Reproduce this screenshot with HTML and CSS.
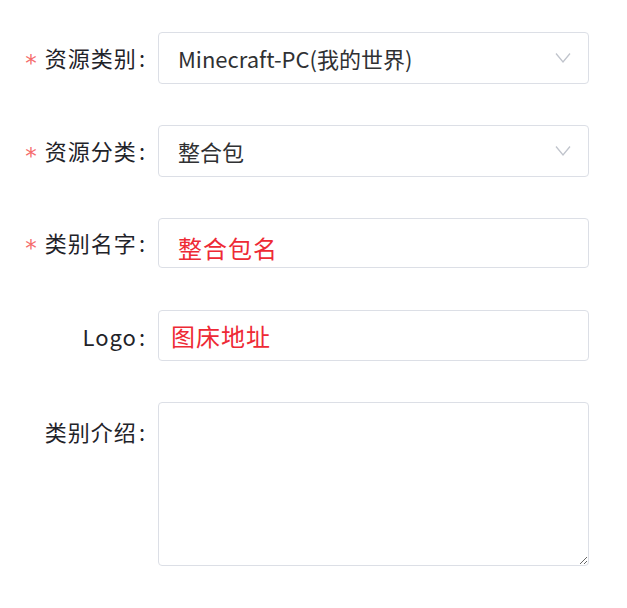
FILE: index.html
```html
<!DOCTYPE html>
<html lang="zh-CN">
<head>
<meta charset="utf-8">
<title>资源表单</title>
<link rel="stylesheet" href="styles.css">
</head>
<body>
<form class="form">
  <div class="item item-select">
    <label class="label"><span class="req">*</span>资源类别<span class="colon">:</span></label>
    <div class="control box">
      <span class="value">Minecraft-PC(我的世界)</span>
      <svg class="arrow" width="16" height="12" viewBox="0 0 16 12"><polyline points="1,1.5 8,10 15,1.5" fill="none" stroke="#c0c4cc" stroke-width="1.3"/></svg>
    </div>
  </div>
  <div class="item item-select">
    <label class="label"><span class="req">*</span>资源分类<span class="colon">:</span></label>
    <div class="control box">
      <span class="value">整合包</span>
      <svg class="arrow" width="16" height="12" viewBox="0 0 16 12"><polyline points="1,1.5 8,10 15,1.5" fill="none" stroke="#c0c4cc" stroke-width="1.3"/></svg>
    </div>
  </div>
  <div class="item item-name">
    <label class="label"><span class="req">*</span>类别名字<span class="colon">:</span></label>
    <div class="control box">
      <span class="red red-name">整合包名</span>
    </div>
  </div>
  <div class="item item-logo">
    <label class="label">Logo<span class="colon">:</span></label>
    <div class="control box">
      <span class="red red-logo">图床地址</span>
    </div>
  </div>
  <div class="item item-desc">
    <label class="label label-top">类别介绍<span class="colon">:</span></label>
    <textarea class="control textarea"></textarea>
  </div>
</form>
</body>
</html>
```

FILE: styles.css
```css
html, body {
  margin: 0;
  padding: 0;
  background: #ffffff;
}
body {
  font-family: "Noto Sans CJK SC", "Open Sans", sans-serif;
  color: #303133;
}
.form {
  padding-top: 32px;
  width: 589px;
}
.item {
  display: flex;
  align-items: center;
}
.item-select {
  height: 52px;
  margin-bottom: 41px;
}
.item-name {
  height: 50px;
  margin-bottom: 42px;
}
.item-logo {
  height: 51px;
  margin-bottom: 41px;
}
.item-desc {
  align-items: flex-start;
  height: 164px;
}
.label {
  width: 158px;
  box-sizing: border-box;
  padding-right: 13px;
  text-align: right;
  font-size: 22px;
  line-height: 30px;
  letter-spacing: 1px;
  color: #1f2329;
  white-space: nowrap;
}
.colon {
  margin-left: 2px;
  letter-spacing: 0;
}
.label-top {
  padding-top: 14px;
}
.req {
  display: inline-block;
  color: #f56c6c;
  font-family: "DejaVu Sans", sans-serif;
  font-size: 23px;
  margin-right: 7px;
  position: relative;
  top: 4px;
}
.control {
  flex: 1;
  height: 100%;
  box-sizing: border-box;
  border: 1px solid #dcdfe6;
  border-radius: 4px;
  background: #fff;
}
.box {
  display: flex;
  align-items: center;
  padding-left: 19px;
  padding-right: 17px;
}
.value {
  flex: 1;
  font-size: 22px;
  color: #303133;
}
.arrow {
  display: block;
}
.red {
  color: #ee2a35;
  font-size: 24px;
  line-height: 30px;
}
.red-name {
  letter-spacing: 1px;
  position: relative;
  top: 5px;
}
.red-logo {
  margin-left: -7px;
  letter-spacing: 1px;
}
.textarea {
  display: block;
  resize: vertical;
  font-family: inherit;
  font-size: 20px;
  padding: 8px 15px;
  outline: none;
}
```
